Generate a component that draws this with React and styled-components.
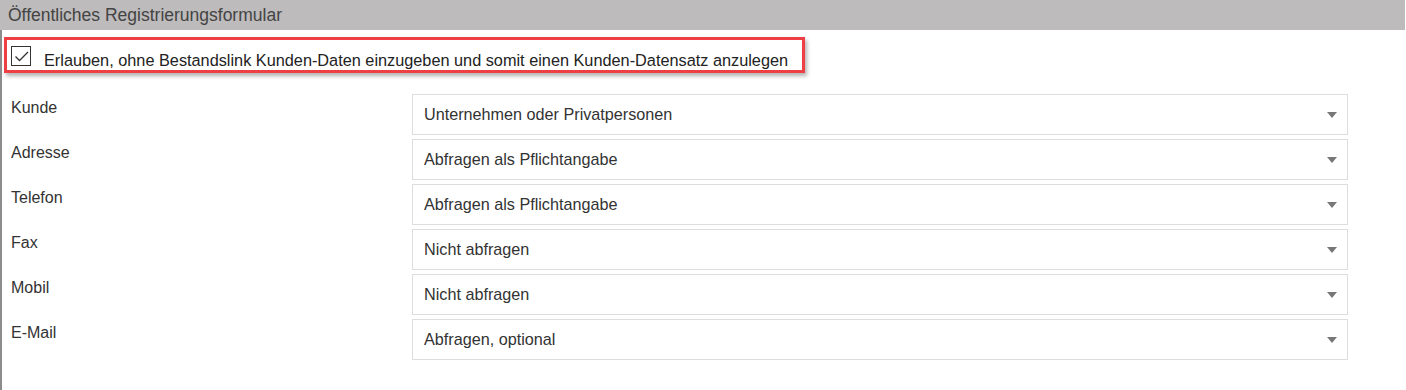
import styled, { createGlobalStyle } from "styled-components";

const GlobalStyle = createGlobalStyle`
  body {
    margin: 0;
    background: #fff;
    font-family: "Liberation Sans", Arial, sans-serif;
    color: #333;
  }
`;

const Panel = styled.section`
  width: 1405px;
  height: 390px;
`;

const Header = styled.div`
  height: 30px;
  background: #bdbbbb;
  color: #444;
  font-size: 17.5px;
  line-height: 30px;
  padding-left: 8px;
`;

const Body = styled.div`
  border-left: 2px solid #8c8c8c;
  height: 360px;
  padding: 7px 0 0 2px;
  box-sizing: border-box;
`;

const Highlight = styled.label`
  display: flex;
  align-items: flex-start;
  gap: 13px;
  width: 791px;
  height: 30px;
  padding: 0 0 0 4px;
  border: 3px solid #ee3f44;
  box-shadow: 2px 3px 4px rgba(0, 0, 0, 0.3);
  font-size: 16.3px;
  color: #222;
`;

const Check = styled.span`
  margin-top: 6px;
  width: 18px;
  height: 18px;
  border: 1px solid #333;
  display: flex;
  align-items: center;
  justify-content: center;
  background: #fff;
  flex: none;
`;

const CheckText = styled.span`
  line-height: 19px;
  padding-top: 11px;
`;

const Fields = styled.div`
  display: grid;
  grid-template-columns: 401px 936px;
  row-gap: 4px;
  margin-top: 21px;
  padding-left: 7px;
`;

const Label = styled.div`
  font-size: 16px;
  line-height: 18px;
  padding-top: 5px;
  color: #333;
`;

const Select = styled.div`
  height: 39px;
  border: 1px solid #ddd;
  display: flex;
  align-items: center;
  justify-content: space-between;
  padding: 0 10px 0 11px;
  font-size: 16.2px;
  color: #333;
`;

const Caret = styled.span`
  width: 0;
  height: 0;
  border-left: 5px solid transparent;
  border-right: 5px solid transparent;
  border-top: 6px solid #777;
`;

const fields = [
  ["Kunde", "Unternehmen oder Privatpersonen"],
  ["Adresse", "Abfragen als Pflichtangabe"],
  ["Telefon", "Abfragen als Pflichtangabe"],
  ["Fax", "Nicht abfragen"],
  ["Mobil", "Nicht abfragen"],
  ["E-Mail", "Abfragen, optional"],
];

export default function App() {
  return (
    <>
      <GlobalStyle />
      <Panel>
        <Header>Öffentliches Registrierungsformular</Header>
        <Body>
          <Highlight>
            <Check>
              <svg width="15" height="11" viewBox="0 0 15 11">
                <path d="M1.5 5.5 L5.5 9.5 L14 1" fill="none" stroke="#333" strokeWidth="1.3" />
              </svg>
            </Check>
            <CheckText>
              Erlauben, ohne Bestandslink Kunden-Daten einzugeben und somit einen Kunden-Datensatz anzulegen
            </CheckText>
          </Highlight>
          <Fields>
            {fields.map(([label, value]) => [
              <Label key={label + "l"}>{label}</Label>,
              <Select key={label + "s"}>
                {value}
                <Caret />
              </Select>,
            ])}
          </Fields>
        </Body>
      </Panel>
    </>
  );
}
